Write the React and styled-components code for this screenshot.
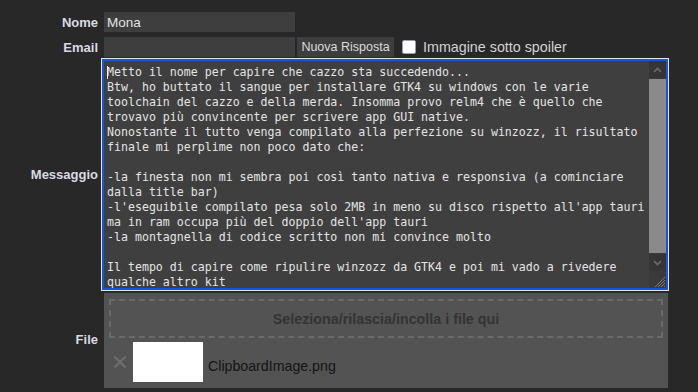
import React from 'react';
import styled, { createGlobalStyle } from 'styled-components';

const GlobalStyle = createGlobalStyle`
  html, body {
    margin: 0;
    padding: 0;
    background: #282828;
  }
  body {
    font-family: "Liberation Sans", Arial, sans-serif;
    font-size: 13px;
  }
`;

const Page = styled.div`
  width: 698px;
  height: 392px;
  padding-top: 12px;
  box-sizing: border-box;
  overflow: hidden;
`;

const Row = styled.div`
  display: flex;
  align-items: center;
  margin-bottom: ${(p) => p.$gap || 0}px;
`;

const Label = styled.label`
  width: 98px;
  margin-right: 6px;
  text-align: right;
  font-weight: bold;
  color: #d8dae2;
  flex-shrink: 0;
`;

const Field = styled.div`
  display: flex;
  align-items: center;
  width: 564px;
`;

const Input = styled.input`
  width: 191px;
  height: 20px;
  box-sizing: border-box;
  padding: 0 3px;
  border: none;
  outline: none;
  background: #3e3e3e;
  color: #e2e2e2;
  font-family: "Liberation Sans", Arial, sans-serif;
  font-size: 13.5px;
`;

const Button = styled.button`
  width: 97px;
  height: 20px;
  margin-left: 2px;
  padding: 0;
  border: none;
  background: #3e3e3e;
  color: #dcdcdc;
  font-family: "Liberation Sans", Arial, sans-serif;
  font-size: 12.5px;
`;

const Check = styled.span`
  width: 12px;
  height: 12px;
  margin-left: 8px;
  margin-right: 7px;
  border: 1px solid #9c9cac;
  border-radius: 2px;
  background: #ffffff;
`;

const CheckText = styled.span`
  font-size: 14.3px;
  color: #d2d2d2;
`;

const TextBox = styled.div`
  display: flex;
  width: 566px;
  height: 231px;
  margin-left: -2px;
  box-sizing: border-box;
  border: 2px solid #1656d8;
  outline: 1px solid #e6e6e6;
  background: #3f3f3f;
`;

const Text = styled.div`
  flex: 1;
  position: relative;
  padding: 4px 3px;
  font-family: "DejaVu Sans Mono", "Liberation Mono", monospace;
  font-size: 11.6px;
  line-height: 15px;
  color: #e4e4e4;
  white-space: pre;
  overflow: hidden;
`;

const Caret = styled.span`
  position: absolute;
  left: 3px;
  top: 5px;
  width: 1px;
  height: 13px;
  background: #f0f0f0;
`;

const Scrollbar = styled.div`
  display: flex;
  flex-direction: column;
  width: 17px;
  background: #3a3a3a;
`;

const ScrollButton = styled.div`
  height: 17px;
  display: flex;
  align-items: center;
  justify-content: center;
  background: #353535;
`;

const Track = styled.div`
  flex: 1;
  padding: 1px 0;
  display: flex;
`;

const Thumb = styled.div`
  flex: 1;
  background: #8a8a8a;
`;

const Grip = styled.div`
  height: 17px;
  display: flex;
  align-items: flex-end;
  justify-content: flex-end;
`;

const FileBox = styled.div`
  width: 564px;
  height: 95px;
  margin-top: 3px;
  box-sizing: border-box;
  padding: 6px 5px;
  background: #535353;
  display: flex;
  flex-direction: column;
  gap: 4px;
`;

const DropZone = styled.div`
  height: 39px;
  box-sizing: border-box;
  border: 2px dashed #6a6a6a;
  display: flex;
  align-items: center;
  justify-content: center;
  font-size: 14.3px;
  font-weight: bold;
  color: #343434;
`;

const FileItem = styled.div`
  display: flex;
  align-items: center;
  padding-left: 4px;
`;

const Remove = styled.span`
  width: 14px;
  margin-right: 6px;
  display: flex;
`;

const Thumbnail = styled.div`
  width: 70px;
  height: 40px;
  background: #ffffff;
`;

const FileName = styled.span`
  margin-left: 5px;
  padding-top: 8px;
  font-size: 14.2px;
  color: #141414;
`;

const lines = [
  'Metto il nome per capire che cazzo sta succedendo...',
  'Btw, ho buttato il sangue per installare GTK4 su windows con le varie',
  'toolchain del cazzo e della merda. Insomma provo relm4 che è quello che',
  'trovavo più convincente per scrivere app GUI native.',
  'Nonostante il tutto venga compilato alla perfezione su winzozz, il risultato',
  'finale mi perplime non poco dato che:',
  '',
  '-la finesta non mi sembra poi così tanto nativa e responsiva (a cominciare',
  'dalla title bar)',
  "-l'eseguibile compilato pesa solo 2MB in meno su disco rispetto all'app tauri",
  "ma in ram occupa più del doppio dell'app tauri",
  '-la montagnella di codice scritto non mi convince molto',
  '',
  'Il tempo di capire come ripulire winzozz da GTK4 e poi mi vado a rivedere',
  'qualche altro kit',
];

export default function App() {
  return (
    <Page>
      <GlobalStyle />
      <Row $gap={5}>
        <Label>Nome</Label>
        <Field>
          <Input defaultValue="Mona" />
        </Field>
      </Row>
      <Row $gap={2}>
        <Label>Email</Label>
        <Field>
          <Input />
          <Button>Nuova Risposta</Button>
          <Check />
          <CheckText>Immagine sotto spoiler</CheckText>
        </Field>
      </Row>
      <Row>
        <Label>Messaggio</Label>
        <TextBox>
          <Text>
            <Caret />
            {lines.join('\n')}
          </Text>
          <Scrollbar>
            <ScrollButton>
              <svg width="9" height="6" viewBox="0 0 9 6">
                <path d="M1 5 L4.5 1.5 L8 5" fill="none" stroke="#6c6c6c" strokeWidth="1.6" />
              </svg>
            </ScrollButton>
            <Track>
              <Thumb />
            </Track>
            <ScrollButton>
              <svg width="9" height="6" viewBox="0 0 9 6">
                <path d="M1 1 L4.5 4.5 L8 1" fill="none" stroke="#6c6c6c" strokeWidth="1.6" />
              </svg>
            </ScrollButton>
            <Grip>
              <svg width="14" height="14" viewBox="0 0 14 14">
                <path d="M13 3 L3 13 M13 6 L6 13 M13 9 L9 13 M13 12 L12 13" stroke="#7a7a7a" strokeWidth="1" />
              </svg>
            </Grip>
          </Scrollbar>
        </TextBox>
      </Row>
      <Row>
        <Label>File</Label>
        <FileBox>
          <DropZone>Seleziona/rilascia/incolla i file qui</DropZone>
          <FileItem>
            <Remove>
              <svg width="14" height="14" viewBox="0 0 14 14">
                <path d="M1.5 1.5 L12.5 12.5 M12.5 1.5 L1.5 12.5" stroke="#6e6e6e" strokeWidth="2.2" />
              </svg>
            </Remove>
            <Thumbnail />
            <FileName>ClipboardImage.png</FileName>
          </FileItem>
        </FileBox>
      </Row>
    </Page>
  );
}
